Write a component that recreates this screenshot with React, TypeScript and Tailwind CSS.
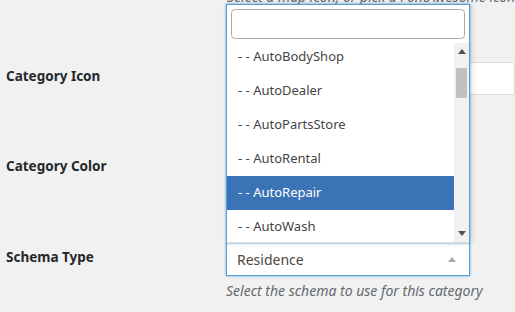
const items = ['AutoBodyShop', 'AutoDealer', 'AutoPartsStore', 'AutoRental', 'AutoRepair', 'AutoWash'];

function Triangle({ up, className }: { up?: boolean; className?: string }) {
  return (
    <svg width="8" height="5" viewBox="0 0 8 5" className={className}>
      <path d={up ? 'M0 5 L4 0 L8 5 Z' : 'M0 0 L8 0 L4 5 Z'} fill="currentColor" />
    </svg>
  );
}

export default function App() {
  return (
    <div
      className="relative h-[312px] w-[515px] overflow-hidden bg-[#f1f1f1] text-[#23282d]"
      style={{ fontFamily: '"Noto Sans", "Open Sans", sans-serif' }}
    >
      {/* form rows */}
      <div className="flex flex-col">
        <div className="ml-[227px] mt-[-13px] h-[20px] whitespace-nowrap text-[14px] italic leading-[20px] text-[#646970]">
          Select a map icon, or pick a FontAwesome icon (see list)
        </div>

        <div className="mt-[55px] flex h-[33px]">
          <div className="w-[226px] shrink-0 pl-[6px] pt-[4px] text-[13.5px] font-bold leading-[20px]">
            Category Icon
          </div>
          <div className="flex-1 rounded-l-[3px] border border-[#dcdcde] bg-white" />
        </div>

        <div className="mt-[56px] flex h-[33px]">
          <div className="w-[226px] shrink-0 pl-[6px] pt-[5px] text-[13.5px] font-bold leading-[20px]">
            Category Color
          </div>
          <div className="flex-1" />
        </div>

        <div className="mt-[59px] flex">
          <div className="w-[226px] shrink-0 pl-[6px] pt-[4px] text-[13.5px] font-bold leading-[20px]">
            Schema Type
          </div>
          <div className="flex flex-col">
            <div className="flex h-[33px] w-[244px] items-center justify-between border border-t-0 border-[#5b9dd9] bg-white pl-[10px] pr-[13px] shadow-[0_0_2px_rgba(30,140,190,0.8)]">
              <span className="text-[14px] text-[#50473f]">Residence</span>
              <Triangle up className="text-[#aaaaaa]" />
            </div>
            <div className="mt-[6px] whitespace-nowrap text-[14px] italic leading-[18px] text-[#646970]">
              Select the schema to use for this category
            </div>
          </div>
        </div>
      </div>

      {/* open select dropdown, above the box */}
      <div className="absolute left-[226px] top-[4px] flex h-[239px] w-[244px] flex-col border border-b-0 border-[#5b9dd9] bg-white shadow-[0_0_2px_rgba(30,140,190,0.8),2px_0_6px_rgba(0,0,0,0.12)]">
        <div className="px-[4px] pt-[4px]">
          <div className="h-[30px] rounded-[4px] border border-[#aaaaaa] bg-white" />
        </div>
        <div className="mt-[4px] flex h-[200px] border-b border-[#dddddd]">
          <div className="flex-1 overflow-hidden">
            <div className="mt-[-3px]">
              {items.map((it) => (
                <div
                  key={it}
                  className={
                    'flex h-[34px] items-center pl-[11px] text-[13px] ' +
                    (it === 'AutoRepair' ? 'bg-[#3a73b6] text-white' : 'text-[#444444]')
                  }
                >
                  - - {it}
                </div>
              ))}
            </div>
          </div>
          <div className="flex w-[15px] flex-col items-center bg-[#f1f1f1]">
            <Triangle up className="mt-[6px] text-[#505050]" />
            <div className="mt-[14px] h-[30px] w-[11px] bg-[#c1c1c1]" />
            <div className="flex-1" />
            <Triangle className="mb-[6px] text-[#505050]" />
          </div>
        </div>
      </div>
    </div>
  );
}
